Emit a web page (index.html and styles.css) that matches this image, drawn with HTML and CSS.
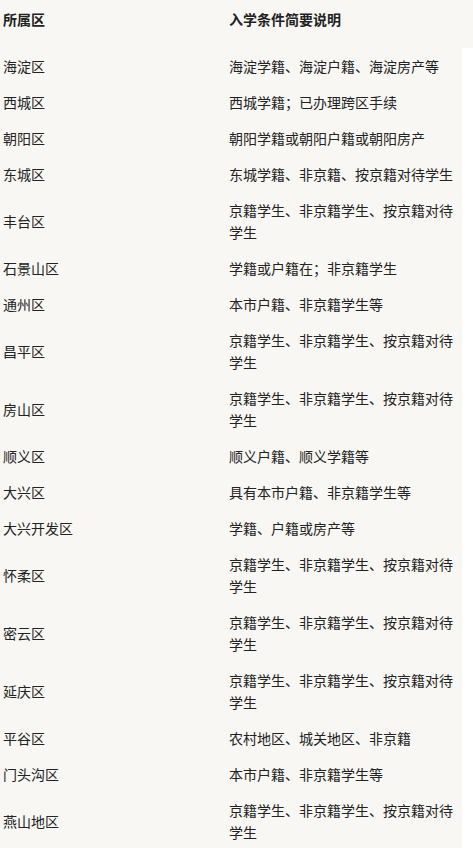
FILE: index.html
```html
<!DOCTYPE html>
<html lang="zh-CN">
<head>
<meta charset="utf-8">
<title>入学条件</title>
<link rel="stylesheet" href="styles.css">
</head>
<body>
<div class="page">
  <div class="head">
    <div class="cell">所属区</div>
    <div class="cell">入学条件简要说明</div>
  </div>
  <div class="rows">
    <div class="row"><div class="cell">海淀区</div><div class="cell">海淀学籍、海淀户籍、海淀房产等</div></div>
    <div class="row"><div class="cell">西城区</div><div class="cell">西城学籍；已办理跨区手续</div></div>
    <div class="row"><div class="cell">朝阳区</div><div class="cell">朝阳学籍或朝阳户籍或朝阳房产</div></div>
    <div class="row"><div class="cell">东城区</div><div class="cell">东城学籍、非京籍、按京籍对待学生</div></div>
    <div class="row"><div class="cell">丰台区</div><div class="cell">京籍学生、非京籍学生、按京籍对待学生</div></div>
    <div class="row"><div class="cell">石景山区</div><div class="cell">学籍或户籍在；非京籍学生</div></div>
    <div class="row"><div class="cell">通州区</div><div class="cell">本市户籍、非京籍学生等</div></div>
    <div class="row"><div class="cell">昌平区</div><div class="cell">京籍学生、非京籍学生、按京籍对待学生</div></div>
    <div class="row"><div class="cell">房山区</div><div class="cell">京籍学生、非京籍学生、按京籍对待学生</div></div>
    <div class="row"><div class="cell">顺义区</div><div class="cell">顺义户籍、顺义学籍等</div></div>
    <div class="row"><div class="cell">大兴区</div><div class="cell">具有本市户籍、非京籍学生等</div></div>
    <div class="row"><div class="cell">大兴开发区</div><div class="cell">学籍、户籍或房产等</div></div>
    <div class="row"><div class="cell">怀柔区</div><div class="cell">京籍学生、非京籍学生、按京籍对待学生</div></div>
    <div class="row"><div class="cell">密云区</div><div class="cell">京籍学生、非京籍学生、按京籍对待学生</div></div>
    <div class="row"><div class="cell">延庆区</div><div class="cell">京籍学生、非京籍学生、按京籍对待学生</div></div>
    <div class="row"><div class="cell">平谷区</div><div class="cell">农村地区、城关地区、非京籍</div></div>
    <div class="row"><div class="cell">门头沟区</div><div class="cell">本市户籍、非京籍学生等</div></div>
    <div class="row"><div class="cell">燕山地区</div><div class="cell">京籍学生、非京籍学生、按京籍对待学生</div></div>
  </div>
</div>
</body>
</html>
```

FILE: styles.css
```css
html, body {
  margin: 0;
  padding: 0;
  background: #ffffff;
}
body {
  font-family: "Noto Sans CJK SC", "Noto Sans", sans-serif;
  font-size: 14px;
  line-height: 22px;
  color: #222222;
}
.page {
  width: 473px;
}
.head {
  display: grid;
  grid-template-columns: 226px 1fr;
  background: #f8f7f4;
  padding: 8px 0 18px;
  font-weight: bold;
}
.rows {
  width: 462px;
  background: #f8f7f4;
}
.row {
  display: grid;
  grid-template-columns: 226px 1fr;
  align-items: center;
  padding: 7px 0;
}
.cell {
  padding-left: 3px;
}
```
